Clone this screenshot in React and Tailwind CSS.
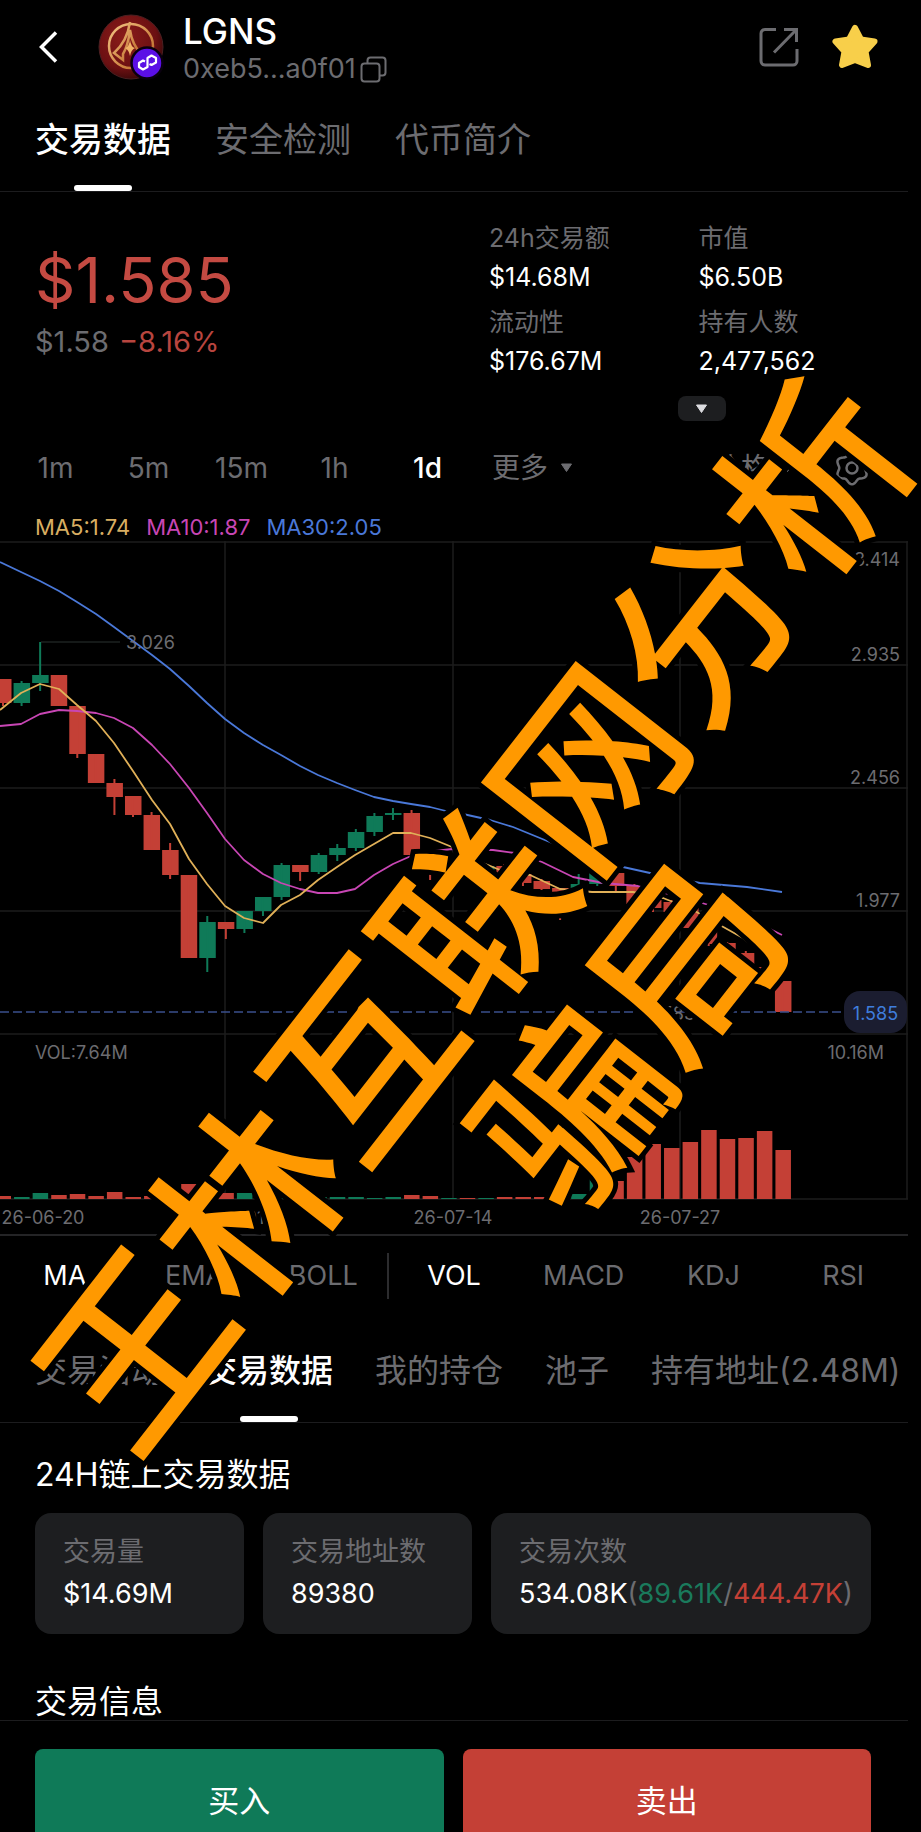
import React, { useState } from 'react';

const GREEN = '#0f7a58';
const RED = '#c44036';

// [open/close top, open/close bottom, high, low, direction, volume height]
const candles = [
  [679, 703, 679, 706, 'down', 3],
  [683, 703, 681, 706, 'up', 2],
  [675, 683, 642, 691, 'up', 6],
  [675, 706, 675, 706, 'down', 4],
  [706, 754, 706, 758, 'down', 5],
  [754, 783, 754, 783, 'down', 3],
  [783, 797, 779, 815, 'down', 7],
  [796, 815, 796, 817, 'down', 2],
  [815, 850, 812, 850, 'down', 3],
  [850, 875, 843, 879, 'down', 4],
  [875, 958, 875, 958, 'down', 15],
  [922, 958, 916, 972, 'up', 8],
  [922, 929, 922, 939, 'down', 6],
  [911, 929, 911, 933, 'up', 6],
  [897, 911, 897, 916, 'up', 3],
  [865, 897, 863, 900, 'up', 3],
  [865, 872, 865, 881, 'down', 2],
  [855, 872, 853, 874, 'up', 2],
  [848, 855, 844, 861, 'up', 2],
  [832, 848, 829, 851, 'up', 2],
  [816, 832, 813, 836, 'up', 1],
  [813, 815, 808, 820, 'up', 2],
  [813, 855, 810, 855, 'down', 4],
  [855, 873, 855, 880, 'down', 3],
  [864, 873, 862, 876, 'up', 1],
  [864, 876, 862, 878, 'down', 1],
  [866, 876, 864, 879, 'up', 1],
  [866, 880, 864, 882, 'down', 2],
  [874, 883, 872, 886, 'down', 2],
  [881, 889, 879, 890, 'down', 2],
  [888, 908, 888, 920, 'down', 2],
  [884, 889, 874, 891, 'up', 5],
  [870, 884, 868, 886, 'up', 20],
  [873, 886, 870, 891, 'down', 18],
  [886, 904, 884, 906, 'down', 42],
  [900, 908, 898, 912, 'down', 55],
  [902, 912, 900, 916, 'down', 51],
  [908, 928, 906, 930, 'down', 57],
  [927, 944, 925, 946, 'down', 69],
  [943, 953, 942, 955, 'down', 60],
  [953, 967, 951, 969, 'down', 61],
  [967, 981, 965, 983, 'down', 68],
  [981, 1012, 981, 1012, 'down', 49],
];

const ma5 =
  '0,710 21,693 40,684 59,689 77,705 96,721 114,743 133,771 152,800 170,824 189,859 207,884 225,906 244,918 263,923 281,905 300,895 318,880 337,867 355,855 374,844 393,833 411,833 430,838 452,847 470,858 488,865 500,870 530,875 560,889 592,892 633,892 663,898 693,910 718,924 743,938 763,954 782,968';
const ma10 =
  '0,726 21,724 40,714 59,710 77,711 96,713 114,718 133,728 152,745 170,764 189,788 207,813 225,839 244,860 263,874 281,883 300,889 318,893 337,893 355,889 374,875 393,864 411,856 435,851 452,849 493,850 515,853 542,862 573,877 603,883 638,886 668,894 702,903 742,915 782,935';
const ma30 =
  '0,562 21,572 40,581 59,591 77,602 96,614 114,627 133,641 152,655 170,669 189,686 207,703 225,719 244,733 263,745 281,755 300,766 318,775 337,783 355,790 374,797 393,801 411,804 430,807 446,811 463,814 490,820 513,827 557,845 590,857 623,867 650,873 700,883 747,887 782,892';

// wavy six-lobed outline of the settings icon
const gearPoints = Array.from({ length: 72 }, (_, i) => {
  const a = (i * Math.PI) / 36;
  const r = 14.5 - 1.8 * Math.cos(6 * a);
  return `${(18 + r * Math.cos(a)).toFixed(2)},${(18 + r * Math.sin(a)).toFixed(2)}`;
}).join(' ');

const intervals = ['1m', '5m', '15m', '1h', '1d'];
const indicators = ['MA', 'EMA', 'BOLL', 'VOL', 'MACD', 'KDJ', 'RSI'];

const priceLabels = [
  ['3.414', 566],
  ['2.935', 661],
  ['2.456', 784],
  ['1.977', 907],
];

const dateLabels = [
  ['26-06-20', 43],
  ['26-07-01', 225],
  ['26-07-14', 453],
  ['26-07-27', 680],
];

const Tabs = ({ items, active, onChange, className }) => (
  <nav className={`flex border-b border-[#1c1c1e] pl-[35px] pt-[22px] ${className}`}>
    {items.map((item) => (
      <button
        key={item}
        type="button"
        onClick={() => onChange(item)}
        className={`flex shrink-0 flex-col items-center whitespace-nowrap leading-[48px] ${
          active === item ? 'font-medium text-white' : 'text-[#6c6c70]'
        }`}
      >
        {item}
        <span className={`mt-[21px] h-[6px] w-[58px] rounded-full ${active === item ? 'bg-white' : ''}`} />
      </button>
    ))}
  </nav>
);

const TokenLogo = () => (
  <svg viewBox="0 0 66 66" className="size-[66px]" aria-hidden="true">
    <defs>
      <radialGradient id="coin" cx="0.4" cy="0.35" r="0.7">
        <stop offset="0" stopColor="#8a1c1a" />
        <stop offset="0.7" stopColor="#6b1012" />
        <stop offset="1" stopColor="#330708" />
      </radialGradient>
      <linearGradient id="gold" x1="0" y1="0" x2="1" y2="1">
        <stop offset="0" stopColor="#f3c483" />
        <stop offset="1" stopColor="#b8601f" />
      </linearGradient>
    </defs>
    <circle cx="33" cy="33" r="32" fill="url(#coin)" stroke="#4a2022" />
    <circle cx="33" cy="32" r="22" fill="none" stroke="url(#gold)" strokeWidth="2.500" />
    <path d="M32 8C30 22 25 31 16 39L25 46V40C30 32 31 23 32 16C33 23 36 33 44 41" fill="none" stroke="url(#gold)" strokeWidth="2.500" />
    <path d="M32 26Q33 33 37 34Q33 36 32 42Q31 36 27 34Q31 33 32 26Z" fill="#f0b266" />
    <circle cx="49" cy="49" r="15.500" fill="#5b0fe6" stroke="#0a0010" strokeWidth="2.500" />
    <path
      d="M47 47.500L45 46.500L41 49V53L45 55.500L49.500 53V44L53.500 41.500L58 44V48.500L53.500 51L51.500 50"
      fill="none"
      stroke="#fff"
      strokeWidth="2.200"
      strokeLinejoin="round"
    />
  </svg>
);

const Caret = () => (
  <svg viewBox="0 0 13 10" className="h-[10px] w-[13px]" aria-hidden="true">
    <path d="M1.500 1H11.500L6.500 8.500Z" fill="currentColor" stroke="currentColor" strokeLinejoin="round" />
  </svg>
);

const Header = () => (
  <header className="flex h-[94px] items-center pl-[38px] pr-[29px]">
    <button type="button" aria-label="返回">
      <svg viewBox="0 0 20 32" className="h-8 w-5" fill="none" stroke="#fff" strokeWidth="3.500">
        <path d="M18 1.500L3.500 16L18 30.500" />
      </svg>
    </button>
    <div className="ml-10 mr-[19px]">
      <TokenLogo />
    </div>
    <div className="pt-1">
      <h1 className="text-[35px] font-medium leading-[40px]">LGNS</h1>
      <div className="flex items-center gap-1 text-[27px] leading-[36px] text-[#6c6c70]">
        0xeb5...a0f01
        <button type="button" aria-label="复制地址">
          <svg viewBox="0 0 27 27" className="size-[27px]" fill="none" stroke="currentColor" strokeWidth="2">
            <rect x="1.500" y="7.500" width="18" height="18" rx="3" />
            <path d="M7.500 7V4.500A3 3 0 0 1 10.500 1.500H22.500A3 3 0 0 1 25.500 4.500V16.500A3 3 0 0 1 22.500 19.500H20" />
          </svg>
        </button>
      </div>
    </div>
    <div className="ml-auto flex items-center gap-8">
      <button type="button" aria-label="分享">
        <svg viewBox="0 0 40 40" className="size-10" fill="none" stroke="#6c6c70" strokeWidth="3">
          <path d="M17 2.500H6A4 4 0 0 0 2 6.500V34A4 4 0 0 0 6 38H34A4 4 0 0 0 38 34V22" />
          <path d="M25 2.500H37.500V15M37 3L15 25.500" />
        </svg>
      </button>
      <button type="button" aria-label="收藏">
        <svg viewBox="0 0 48 48" className="size-12" fill="#f8cf4a" stroke="#f8cf4a" strokeWidth="6" strokeLinejoin="round">
          <path d="M24 5L30 16.500L43.500 18.500L34.500 28.500L37 42L24 37L11 42L13.500 28.500L4.500 18.500L18 16.500Z" />
        </svg>
      </button>
    </div>
  </header>
);

const Stat = ({ label, value }) => (
  <div>
    <dt className="text-[25px] leading-[38px] text-[#6c6c70]">{label}</dt>
    <dd className="text-[25px] leading-[40px]">{value}</dd>
  </div>
);

const Chart = () => (
  <svg viewBox="0 541 908 693" className="block w-full" role="img" aria-label="LGNS 1d">
    <g stroke="#1d1d1d" strokeWidth="1.500">
      {[542, 665, 788, 911, 1034, 1199].map((y) => (
        <line key={y} x1="0" x2="908" y1={y} y2={y} />
      ))}
      {[225, 453, 680, 907].map((x) => (
        <line key={x} x1={x} x2={x} y1="541" y2="1199" />
      ))}
    </g>

    {candles.map(([top, bottom, high, low, dir, vol], i) => {
      const x = 3 + i * 18.57;
      const color = dir === 'up' ? GREEN : RED;
      return (
        <g key={i} fill={color}>
          <rect x={x - 8} y={top} width="16.500" height={bottom - top} />
          <rect x={x - 1} y={high} width="2" height={low - high} />
          <rect x={x - 7.5} y={1199 - vol} width="15.500" height={vol} />
        </g>
      );
    })}

    <g fill="none" strokeWidth="1.800" strokeLinejoin="round">
      <polyline points={ma30} stroke="#4a78d8" />
      <polyline points={ma10} stroke="#c846b4" />
      <polyline points={ma5} stroke="#e0b058" />
    </g>

    <line x1="41" x2="120" y1="642" y2="642" stroke="#2a3330" />
    <line x1="0" x2="844" y1="1012" y2="1012" stroke="#3a4f8c" strokeWidth="1.500" strokeDasharray="9 4" />

    <g fill="#6c6c70" fontSize="18">
      <text x="126" y="649">3.026</text>
      <text x="695" y="1020" textAnchor="end">1.583</text>
      <text x="35" y="1059">VOL:7.64M</text>
      <text x="884" y="1059" textAnchor="end">10.16M</text>
      {priceLabels.map(([label, y]) => (
        <text key={label} x="900" y={y} textAnchor="end">{label}</text>
      ))}
      {dateLabels.map(([label, x]) => (
        <text key={label} x={x} y="1224" textAnchor="middle">{label}</text>
      ))}
    </g>

    <rect x="844" y="991" width="63" height="42" rx="16" fill="#1b1d30" />
    <text x="875.500" y="1020" textAnchor="middle" fontSize="18" fill="#3f7ddc">1.585</text>
  </svg>
);

const Card = ({ label, children, className }) => (
  <div className={`rounded-2xl bg-[#1d1e20] pb-[17px] pl-7 pt-5 ${className}`}>
    <dt className="text-[27px] leading-[38px] text-[#6c6c70]">{label}</dt>
    <dd className="whitespace-nowrap text-[27px] leading-[46px]">{children}</dd>
  </div>
);

const App = () => {
  const [topTab, setTopTab] = useState('交易数据');
  const [dataTab, setDataTab] = useState('交易数据');
  const [interval, setInterval] = useState('1d');
  const [shown, setShown] = useState(['MA', 'VOL']);

  const toggleIndicator = (name) => {
    setShown(shown.includes(name) ? shown.filter((n) => n !== name) : [...shown, name]);
  };

  return (
    <div className="relative min-h-screen overflow-hidden bg-black pr-[13px] font-['Inter','Noto_Sans_CJK_SC',sans-serif] text-white">
      <Header />
      <Tabs
        items={['交易数据', '安全检测', '代币简介']}
        active={topTab}
        onChange={setTopTab}
        className="gap-11 text-[34px]"
      />

      <section className="flex justify-between pl-[35px] pt-[27px]">
        <div className="pt-[25px]">
          <p className="text-[63px] leading-[72px] text-[#c44a42]">$1.585</p>
          <p className="mt-2 flex gap-[10px] text-[29px] leading-[36px] text-[#6c6c70]">
            $1.58 <span className="text-[#b8453f]">−8.16%</span>
          </p>
        </div>
        <div className="w-[48%]">
          <dl className="grid grid-cols-2 gap-y-[6px]">
            <Stat label="24h交易额" value="$14.68M" />
            <Stat label="市值" value="$6.50B" />
            <Stat label="流动性" value="$176.67M" />
            <Stat label="持有人数" value="2,477,562" />
          </dl>
          <button
            type="button"
            aria-label="展开"
            className="ml-[189px] mt-[15px] flex h-[25px] w-12 items-center justify-center rounded-lg bg-[#1d1e20] text-[#dcdce0]"
          >
            <Caret />
          </button>
        </div>
      </section>

      <div className="mt-[27px] flex items-center pl-[9px] pr-[38px] text-[28px] leading-[40px] text-[#6c6c70]">
        {intervals.map((item) => (
          <button
            key={item}
            type="button"
            onClick={() => setInterval(item)}
            className={`w-[93px] ${interval === item ? 'font-medium text-white' : ''}`}
          >
            {item}
          </button>
        ))}
        <button type="button" className="ml-[18px] flex items-center gap-3">更多 <Caret /></button>
        <button type="button" className="ml-auto flex items-center gap-3">价格 <Caret /></button>
        <button type="button" aria-label="设置" className="ml-10">
          <svg viewBox="0 0 36 36" className="size-9" fill="none" stroke="currentColor" strokeWidth="2.500">
            <polygon points={gearPoints} strokeLinejoin="round" />
            <circle cx="18" cy="18" r="5.500" />
          </svg>
        </button>
      </div>

      <div className="mt-[25px] flex gap-4 pl-[35px] text-[22px] leading-[28px]">
        <span className="text-[#d8ae62]">MA5:1.74</span>
        <span className="text-[#c846b4]">MA10:1.87</span>
        <span className="text-[#4a78d8]">MA30:2.05</span>
      </div>

      <Chart />

      <div className="grid h-[82px] grid-cols-7 items-center border-t-2 border-[#242426] text-[27px]">
        {indicators.map((name) => (
          <button
            key={name}
            type="button"
            onClick={() => toggleIndicator(name)}
            className={`h-[46px] ${shown.includes(name) ? 'text-white' : 'text-[#6c6c70]'} ${
              name === 'BOLL' ? 'border-r-2 border-[#2c2c2e]' : ''
            }`}
          >
            {name}
          </button>
        ))}
      </div>

      <Tabs
        items={['交易活动', '交易数据', '我的持仓', '池子', '持有地址(2.48M)']}
        active={dataTab}
        onChange={setDataTab}
        className="mt-[9px] gap-[42px] text-[32px]"
      />

      <main className="pl-[35px] pr-[37px]">
        <h2 className="mt-7 text-[32px] leading-[48px]">24H链上交易数据</h2>
        <dl className="mt-[14px] flex gap-[19px]">
          <Card label="交易量" className="flex-1">$14.69M</Card>
          <Card label="交易地址数" className="flex-1">89380</Card>
          <Card label="交易次数" className="w-[380px]">
            534.08K<span className="text-[#6c6c70]">(</span>
            <span className="text-[#1a7a5c]">89.61K</span>
            <span className="text-[#6c6c70]">/</span>
            <span className="text-[#c44036]">444.47K</span>
            <span className="text-[#6c6c70]">)</span>
          </Card>
        </dl>
        <h2 className="mt-[50px] text-[32px] leading-[36px]">交易信息</h2>
      </main>

      <footer className="flex gap-[19px] border-t border-[#1c1c1e] pl-[35px] pr-[37px] pt-7 text-[31px] leading-[36px]">
        <button type="button" className="flex-1 rounded-t-lg bg-[#0f7a58] pb-[13px] pt-[34px]">买入</button>
        <button type="button" className="flex-1 rounded-t-lg bg-[#c44036] pb-[13px] pt-[34px]">卖出</button>
      </footer>

      <div className="pointer-events-none absolute inset-0 overflow-hidden">
        <p className="absolute left-[59%] top-[52.8%] -translate-x-1/2 -translate-y-1/2 -rotate-52 whitespace-nowrap text-center font-['Noto_Sans_CJK_SC',sans-serif] text-[184px] font-medium leading-[196px] text-[#ff9900] [-webkit-text-stroke:10px_black] [paint-order:stroke_fill]">
          王林互联网分析
          <br />
          骗局
        </p>
      </div>
    </div>
  );
};

export default App;
